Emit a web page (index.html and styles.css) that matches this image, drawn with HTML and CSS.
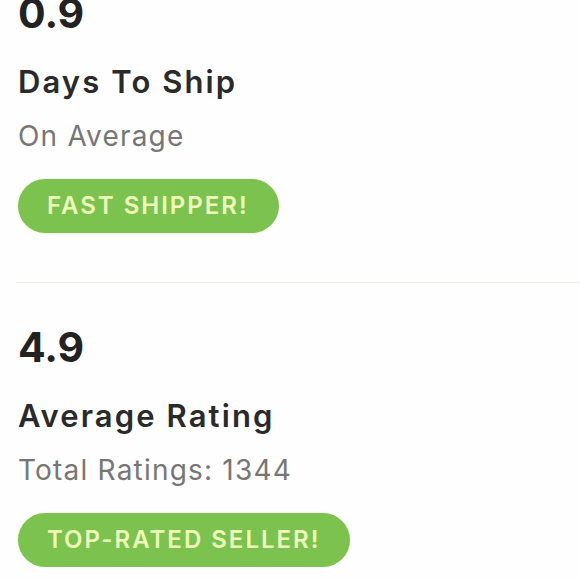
FILE: index.html
```html
<!DOCTYPE html>
<html lang="en">
<head>
<meta charset="utf-8">
<title>Seller stats</title>
<link rel="stylesheet" href="styles.css">
</head>
<body>
  <div class="stats">
    <section class="stat stat-first">
      <div class="stat-value">0.9</div>
      <div class="stat-title">Days To Ship</div>
      <div class="stat-sub">On Average</div>
      <span class="badge">Fast Shipper!</span>
    </section>
    <hr class="divider">
    <section class="stat">
      <div class="stat-value">4.9</div>
      <div class="stat-title">Average Rating</div>
      <div class="stat-sub">Total Ratings: 1344</div>
      <span class="badge">Top-Rated Seller!</span>
    </section>
  </div>
</body>
</html>
```

FILE: styles.css
```css
html, body {
  margin: 0;
  padding: 0;
  background: #fefefe;
}

body {
  font-family: Inter, "Noto Sans", sans-serif;
  overflow: hidden;
}

.stats {
  display: flex;
  flex-direction: column;
}

.stat {
  display: flex;
  flex-direction: column;
  align-items: flex-start;
  padding-left: 18px;
}

.stat-first {
  margin-top: -11px;
}

.stat-value {
  font-size: 41px;
  line-height: 48px;
  font-weight: 700;
  color: #222222;
}

.stat-title {
  margin-top: 27px;
  font-size: 31px;
  line-height: 36px;
  font-weight: 600;
  letter-spacing: 2.1px;
  color: #2a2a2a;
}

.stat-sub {
  margin-top: 20px;
  font-size: 28px;
  line-height: 32px;
  font-weight: 400;
  letter-spacing: 1.2px;
  color: #767676;
}

.badge {
  margin-top: 27px;
  display: inline-flex;
  align-items: center;
  height: 54px;
  padding: 0 30px 2px 29px;
  box-sizing: border-box;
  border-radius: 27px;
  background: #7cc24f;
  box-shadow: 0 0 2px #e6f4c6;
  color: #eefab9;
  font-size: 24px;
  font-weight: 600;
  text-transform: uppercase;
  letter-spacing: 2px;
}

.divider {
  margin: 49px 0 40px 16px;
  border: 0;
  border-top: 1px solid #efefe6;
  height: 0;
}
```
